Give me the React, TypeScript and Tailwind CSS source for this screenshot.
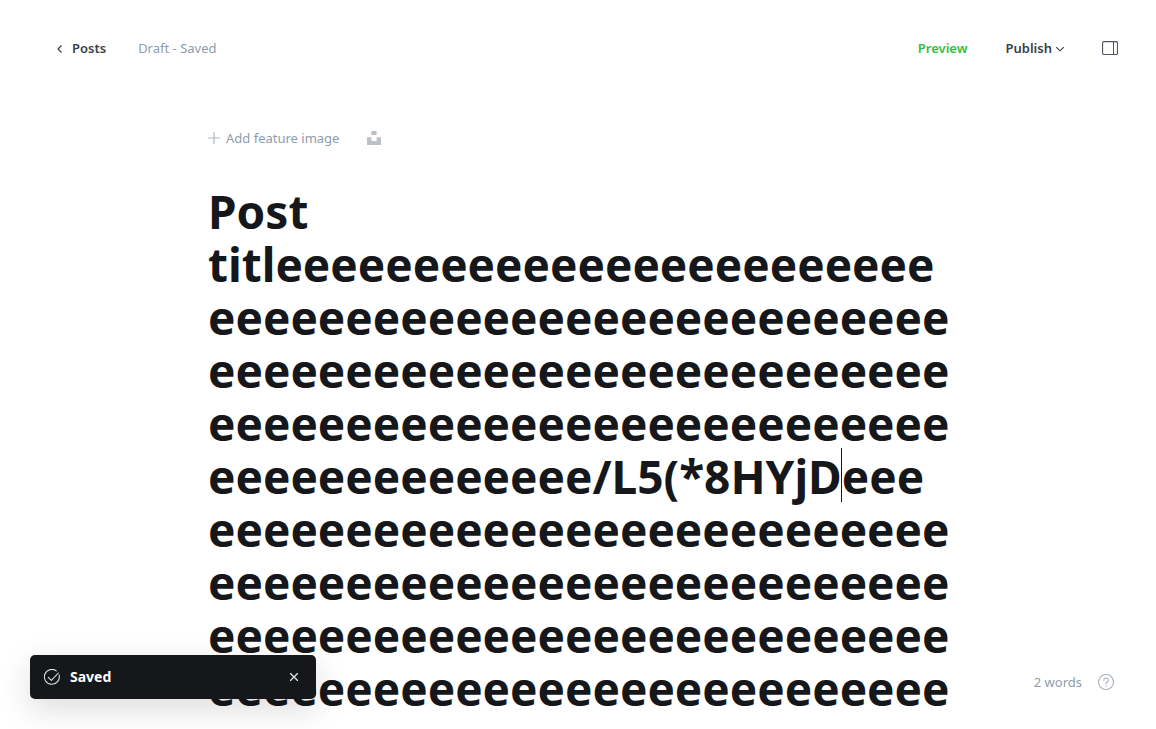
import { useState } from "react";

const initialTitle = [
  "Post",
  "titl" + "e".repeat(24),
  "e".repeat(27),
  "e".repeat(27),
  "e".repeat(27),
  "e".repeat(14) + "/L5(*8HYjDeee",
  "e".repeat(27),
  "e".repeat(27),
  "e".repeat(27),
  "e".repeat(27),
].join("\n");

function Header() {
  return (
    <header className="flex h-24 shrink-0 items-center justify-between pr-[38px] pl-14">
      <div className="flex items-center gap-8">
        <a href="#posts" className="flex items-center gap-2 font-semibold text-[#394047]">
          <svg aria-hidden="true" viewBox="0 0 8 8" className="mt-px size-2 fill-none stroke-current">
            <path d="M5.5 0.5 2 4l3.5 3.5" strokeWidth="1.2" />
          </svg>
          Posts
        </a>
        <span className="text-[#8e9cac]">Draft - Saved</span>
      </div>
      <div className="flex items-center gap-[38px]">
        <button type="button" className="font-semibold text-[#30c043]">
          Preview
        </button>
        <button type="button" className="flex items-center gap-1 font-semibold text-[#394047]">
          Publish
          <svg aria-hidden="true" viewBox="0 0 8 8" className="mt-0.5 size-2 fill-none stroke-current">
            <path d="M0.3 2.2 4 5.8l3.7-3.6" strokeWidth="1.1" />
          </svg>
        </button>
        <button type="button" aria-label="Settings" className="text-[#4d5560]">
          <svg aria-hidden="true" viewBox="0 0 16 16" className="size-4 fill-none stroke-current">
            <rect x="0.6" y="1.6" width="14.9" height="12.9" rx="1.4" strokeWidth="1.1" />
            <path d="M11.5 1.6v12.9" strokeWidth="1" />
          </svg>
        </button>
      </div>
    </header>
  );
}

function Toast({ onClose }: { onClose: () => void }) {
  return (
    <div
      role="status"
      className="absolute bottom-[30px] left-[30px] flex h-11 w-[286px] items-center rounded-[5px] bg-[#15171a] pr-4 pl-3.5 text-white shadow-[0_10px_32px_rgba(0,0,0,0.14)]"
    >
      <svg
        aria-hidden="true"
        viewBox="0 0 24 24"
        className="size-4 fill-none stroke-[#e1e3e5]"
        strokeWidth="1.6"
        strokeLinecap="round"
        strokeLinejoin="round"
      >
        <path d="m6.5 12.5 4.6 4.5L21.5 6" />
        <path d="M22.7 9.2A11.2 11.2 0 1 1 18.5 2.8" />
      </svg>
      <span className="ml-2.5 text-[14px] font-bold">Saved</span>
      <button type="button" aria-label="Close" className="ml-auto p-0.5" onClick={onClose}>
        <svg aria-hidden="true" viewBox="0 0 8 8" className="size-2 fill-none stroke-[#e5e6e8]">
          <path d="m0 0 8 8M8 0 0 8" strokeWidth="1.3" />
        </svg>
      </button>
    </div>
  );
}

export default function App() {
  const [title, setTitle] = useState(initialTitle);
  const [toastOpen, setToastOpen] = useState(true);

  return (
    <div className="relative flex h-screen flex-col overflow-hidden bg-white font-['Noto_Sans',sans-serif] text-[13px] leading-5">
      <Header />
      <main className="mx-auto w-full max-w-[740px] pt-8">
        <div className="flex items-center gap-7 text-[#8e9cac]">
          <button type="button" className="flex items-center gap-1.5">
            <svg aria-hidden="true" viewBox="0 0 12 12" className="size-3 fill-none stroke-[#aeb7c1]">
              <path d="M6 0v12M0 6h12" strokeWidth="1.2" />
            </svg>
            Add feature image
          </button>
          <button type="button" aria-label="Unsplash">
            <svg aria-hidden="true" viewBox="0 0 14 14" className="size-3.5 fill-[#bac1c8]">
              <path d="M4.4 0h5.2v3.9H4.4zM9.6 6.2H14V14H0V6.2h4.4v3.9h5.2z" />
            </svg>
          </button>
        </div>
        <div className="relative -mr-2 mt-[37px]">
          <textarea
            aria-label="Post title"
            rows={10}
            value={title}
            onChange={(event) => setTitle(event.target.value)}
            className="block w-full resize-none overflow-hidden text-[46px] leading-[53px] font-bold text-[#15171a] outline-none"
          />
          <span aria-hidden="true" className="absolute top-[263px] left-[633px] h-[54px] w-px bg-[#15171a]" />
        </div>
      </main>
      <div className="absolute right-[42px] bottom-[37px] flex items-center gap-4 text-[#8e9cac]">
        <span>2 words</span>
        <a href="#help" aria-label="Help">
          <svg
            aria-hidden="true"
            viewBox="0 0 24 24"
            className="size-4 fill-none stroke-[#a3adba]"
            strokeWidth="1.6"
            strokeLinecap="round"
            strokeLinejoin="round"
          >
            <circle cx="12" cy="12" r="11.2" />
            <path d="M8.6 9.4a3.4 3.4 0 1 1 4.8 3.1c-.9.4-1.4 1.1-1.4 2v.6" />
            <path d="M12 18v.2" strokeWidth="1.8" />
          </svg>
        </a>
      </div>
      {toastOpen && <Toast onClose={() => setToastOpen(false)} />}
    </div>
  );
}
